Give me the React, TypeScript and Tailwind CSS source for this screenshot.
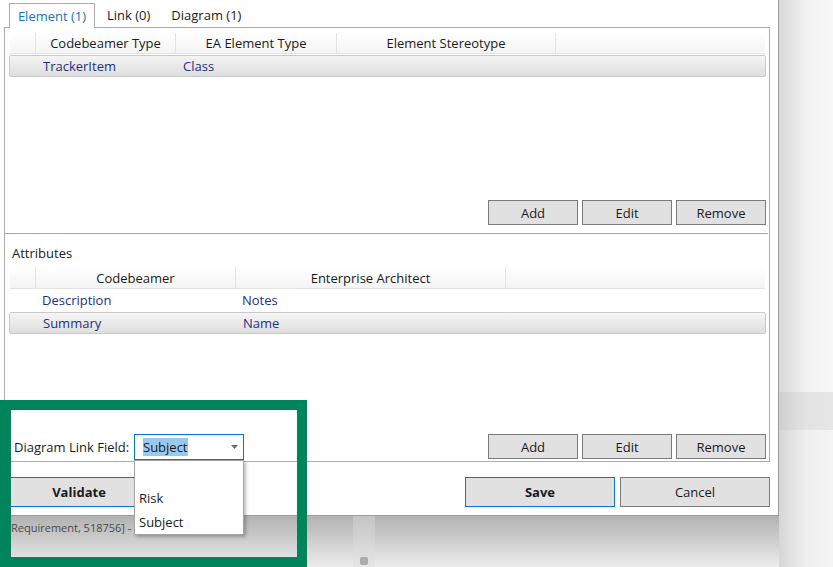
import React from "react";

function Btn({ label, className = "" }: { label: string; className?: string }) {
  return (
    <div
      className={
        "h-[25px] w-[90px] border border-[#7a7a7a] bg-[#e1e1e1] text-[13px] text-[#1a1a1a] flex items-center justify-center pt-[2px] " +
        className
      }
    >
      {label}
    </div>
  );
}

function HeaderCell({ w, label, last }: { w?: string; label?: string; last?: boolean }) {
  return (
    <div
      className={
        (w ? w : "flex-1") +
        " h-full flex items-center justify-center pt-[2px] text-[13px] text-[#1a1a1a] " +
        (last ? "" : "border-r border-[#e3e3e3]")
      }
    >
      {label}
    </div>
  );
}

function DataRow({
  cells,
  selected,
  widths,
}: {
  cells: string[];
  selected?: boolean;
  widths: string[];
}) {
  return (
    <div
      className={
        "h-[22px] flex items-center pt-[2px] text-[13px] text-[#1f2f80] " +
        (selected
          ? "-mx-[1px] px-[1px] border border-[#cacaca] rounded-[2px] bg-gradient-to-b from-[#f5f5f5] to-[#dedede]"
          : "")
      }
    >
      <div className="w-[26px]" />
      {cells.map((c, i) => (
        <div key={i} className={widths[i] + " pl-[6px]"}>
          {c}
        </div>
      ))}
    </div>
  );
}

export default function App() {
  return (
    <div className="relative w-[833px] h-[567px] overflow-hidden bg-[#f5f5f5] font-['Open_Sans',sans-serif] flex">
      {/* Left column: dialog + underlying window strip */}
      <div className="w-[779px] flex flex-col">
        <div className="h-[516px] bg-white border-r border-b border-[#9c9c9c] flex flex-col pl-[4px] pr-[8px]">
          {/* Tabs */}
          <div className="h-[27px] flex items-end text-[13px]">
            <div className="relative z-10 -mb-[1px] ml-[5px] h-[25px] w-[86px] border border-b-0 border-[#acacac] bg-white flex items-center justify-center pt-[1px] text-[#1b6ec2]">
              Element (1)
            </div>
            <div className="h-[24px] flex items-center pt-[1px] ml-[12px] text-[#1a1a1a]">Link (0)</div>
            <div className="h-[24px] flex items-center pt-[1px] ml-[21px] text-[#1a1a1a]">Diagram (1)</div>
          </div>

          {/* Tab panel */}
          <div className="h-[435px] border border-[#acacac] flex flex-col pt-[5px] pb-[1px]">
            {/* Grid 1 */}
            <div className="h-[167px] pl-[5px] pr-[4px] flex flex-col">
              <div className="h-[21px] flex border-b border-[#e3e3e3] bg-gradient-to-b from-white to-[#f4f4f4]">
                <HeaderCell w="w-[26px]" />
                <HeaderCell w="w-[140px]" label="Codebeamer Type" />
                <HeaderCell w="w-[161px]" label="EA Element Type" />
                <HeaderCell w="w-[219px]" label="Element Stereotype" />
                <HeaderCell last />
              </div>
              <div className="mt-[1px]">
                <DataRow
                  selected
                  cells={["TrackerItem", "Class"]}
                  widths={["w-[140px]", "w-[161px]"]}
                />
              </div>
            </div>
            <div className="h-[25px] flex justify-end gap-[4px] pr-[3px]">
              <Btn label="Add" />
              <Btn label="Edit" />
              <Btn label="Remove" />
            </div>
            <div className="mt-[8px] h-[1px] bg-[#a6a6a6] -ml-[1px] mr-[1px]" />
            <div className="mt-[10px] h-[18px] pl-[7px] pt-[2px] flex items-center text-[13px] text-[#1a1a1a]">
              Attributes
            </div>
            {/* Grid 2 */}
            <div className="mt-[5px] flex-1 pl-[5px] pr-[4px] flex flex-col">
              <div className="h-[22px] flex border-b border-[#e3e3e3] bg-gradient-to-b from-white to-[#f4f4f4]">
                <HeaderCell w="w-[26px]" />
                <HeaderCell w="w-[200px]" label="Codebeamer" />
                <HeaderCell w="w-[270px]" label="Enterprise Architect" />
                <HeaderCell last />
              </div>
              <DataRow cells={["Description", "Notes"]} widths={["w-[200px]", "w-[270px]"]} />
              <div className="mt-[1px]">
                <DataRow
                  selected
                  cells={["Summary", "Name"]}
                  widths={["w-[200px]", "w-[270px]"]}
                />
              </div>
            </div>
            {/* Bottom row */}
            <div className="h-[26px] flex items-start">
              <div className="w-[129px] pl-[9px] h-[26px] pt-[2px] flex items-center text-[13px] text-[#1a1a1a] whitespace-nowrap">
                Diagram Link Field:
              </div>
              <div className="w-[110px] h-[26px] border border-[#0078d7] bg-white flex items-center pl-[8px] pr-[5px]">
                <span className="bg-[#99c9ef] text-[13px] text-[#1a1a1a] leading-[17px] pt-[1px]">Subject</span>
                <div className="flex-1" />
                <svg width="7" height="4" viewBox="0 0 7 4">
                  <path d="M0 0H7L3.5 4Z" fill="#6a6a6a" />
                </svg>
              </div>
              <div className="flex-1" />
              <div className="flex gap-[4px] pr-[3px]">
                <Btn label="Add" />
                <Btn label="Edit" />
                <Btn label="Remove" />
              </div>
            </div>
          </div>

          {/* Dialog buttons */}
          <div className="mt-[15px] h-[30px] flex">
            <div className="w-[150px] h-[30px] border border-[#0078d7] bg-[#e1e1e1] flex items-center justify-center pt-[2px] text-[13px] font-bold text-[#1a1a1a]">
              Validate
            </div>
            <div className="flex-1" />
            <div className="w-[150px] h-[30px] border border-[#0078d7] bg-[#e1e1e1] flex items-center justify-center pt-[2px] text-[13px] font-bold text-[#1a1a1a]">
              Save
            </div>
            <div className="w-[150px] h-[30px] ml-[5px] border border-[#7a7a7a] bg-[#e1e1e1] flex items-center justify-center pt-[2px] text-[13px] text-[#1a1a1a]">
              Cancel
            </div>
          </div>
        </div>

        {/* Underlying window strip */}
        <div className="flex-1 flex bg-gradient-to-b from-[#b2b2b2] to-[#ededed]">
          <div className="w-[353px] pl-[11px] pt-[3px] text-[11px] text-[#4a4a4a] whitespace-nowrap leading-[18px]">
            Requirement, 518756] -
          </div>
          <div className="w-[22px] h-full bg-gradient-to-b from-[#c4c4c4] to-[#e6e6e6] flex flex-col justify-end items-center pb-[2px]">
            <div className="w-[8px] h-[8px] rounded-[2px] bg-[#ababab]" />
          </div>
        </div>
      </div>

      {/* Right shadow column */}
      <div className="flex-1 flex flex-col">
        <div className="h-[392px] bg-gradient-to-r from-[#d8d8d8] via-[#f1f1f1] to-[#f8f8f8]" />
        <div className="h-[38px] bg-gradient-to-r from-[#cfcfcf] via-[#e3e3e3] to-[#e6e6e6]" />
        <div className="flex-1 bg-gradient-to-r from-[#d6d6d6] via-[#efefef] to-[#f5f5f5]" />
      </div>

      {/* Green highlight frame */}
      <div className="absolute left-0 top-[400px] w-[307px] h-[167px] border-[10px] border-l-[11px] border-[#00845a] pointer-events-none" />

      {/* Dropdown popup */}
      <div className="absolute left-[134px] top-[460px] w-[110px] h-[75px] bg-white border border-[#a3a3a3] shadow-[2px_2px_3px_rgba(0,0,0,0.25)] pt-[1px] text-[13px] text-[#1a1a1a]">
        <div className="h-[24px]" />
        <div className="h-[24px] pl-[4px] pt-[2px] flex items-center">Risk</div>
        <div className="h-[24px] pl-[4px] pt-[2px] flex items-center">Subject</div>
      </div>
    </div>
  );
}
